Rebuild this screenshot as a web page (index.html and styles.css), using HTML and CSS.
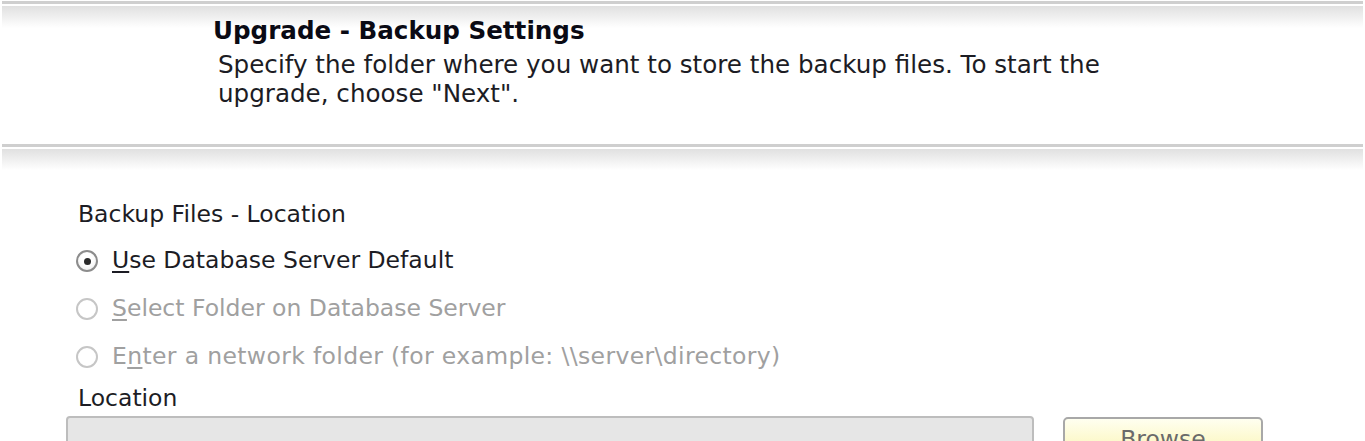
FILE: index.html
```html
<!DOCTYPE html>
<html>
<head>
<meta charset="utf-8">
<link rel="stylesheet" href="styles.css">
</head>
<body>
<div class="page">
  <div class="header">
    <div class="title">Upgrade - Backup Settings</div>
    <div class="desc">Specify the folder where you want to store the backup files. To start the<br>upgrade, choose "Next".</div>
  </div>
  <div class="shade"></div>
  <div class="content">
    <div class="heading">Backup Files - Location</div>
    <div class="radio checked"><span class="circle"><span class="dot"></span></span><span class="label"><u>U</u>se Database Server Default</span></div>
    <div class="radio disabled"><span class="circle"></span><span class="label"><u>S</u>elect Folder on Database Server</span></div>
    <div class="radio disabled"><span class="circle"></span><span class="label wide">E<u>n</u>ter a network folder (for example: \\server\directory)</span></div>
    <div class="heading loc">Location</div>
    <div class="field-row">
      <div class="input"></div>
      <div class="button">Browse</div>
    </div>
  </div>
</div>
</body>
</html>
```

FILE: styles.css
```css
html, body {
  margin: 0;
  padding: 0;
  background: #fff;
}
body {
  font-family: "DejaVu Sans", sans-serif;
  font-size: 23.5px;
  color: #1c1c24;
  overflow: hidden;
  height: 441px;
}
.page {
  width: 1365px;
}
.header {
  margin: 1px 2px 0 2px;
  border-top: 3px solid #cfcfcf;
  background: linear-gradient(#fff 0, #fff 2px, #e0e0e0 2px, #fff 24px);
  padding: 13px 0 35px 0;
  height: 92px;
}
.title {
  font-weight: bold;
  font-size: 24.6px;
  line-height: 28px;
  padding-left: 211px;
  color: #0a0a14;
}
.desc {
  margin-top: 6px;
  font-size: 24.6px;
  line-height: 28.5px;
  padding-left: 216px;
}
.shade {
  margin: 0 2px;
  border-top: 3px solid #cfcfcf;
  height: 23px;
  background: linear-gradient(#fff 0, #fff 2px, #e0e0e0 2px, #fff 23px);
}
.content {
  padding: 30px 0 0 66px;
}
.heading {
  line-height: 28px;
  padding-left: 12px;
}
.radio {
  display: flex;
  align-items: center;
  height: 48px;
  line-height: 48px;
  padding-left: 10px;
}
.heading + .radio {
  margin-top: 8px;
}
.circle {
  box-sizing: border-box;
  width: 22px;
  height: 22px;
  border-radius: 50%;
  border: 2px solid #8c8c8c;
  background: radial-gradient(circle at 50% 40%, #fff 40%, #e8e8e8 100%);
  display: flex;
  align-items: center;
  justify-content: center;
  margin-right: 14px;
  margin-top: 2px;
}
.dot {
  width: 7px;
  height: 7px;
  border-radius: 50%;
  background: #2a2a2a;
}
.disabled .circle {
  border-color: #c6c6c6;
  background: #fff;
}
.disabled .label {
  color: #a0a0a0;
}
.label.wide {
  letter-spacing: 0.35px;
}
u {
  text-underline-offset: 3px;
  text-decoration-thickness: 2px;
}
.heading.loc {
  margin-top: 4px;
}
.field-row {
  display: flex;
  align-items: flex-start;
  margin-top: 4px;
}
.input {
  width: 968px;
  height: 34px;
  box-sizing: border-box;
  border: 2px solid #bdbdbd;
  border-radius: 4px;
  background: #e6e6e6;
}
.button {
  box-sizing: border-box;
  width: 200px;
  height: 36px;
  margin-left: 29px;
  margin-top: 1px;
  border: 2px solid #a8a8a8;
  border-radius: 5px;
  background: linear-gradient(#fffff0, #fbf6bc);
  color: #6a6a6a;
  text-align: center;
  line-height: 40px;
}
```
